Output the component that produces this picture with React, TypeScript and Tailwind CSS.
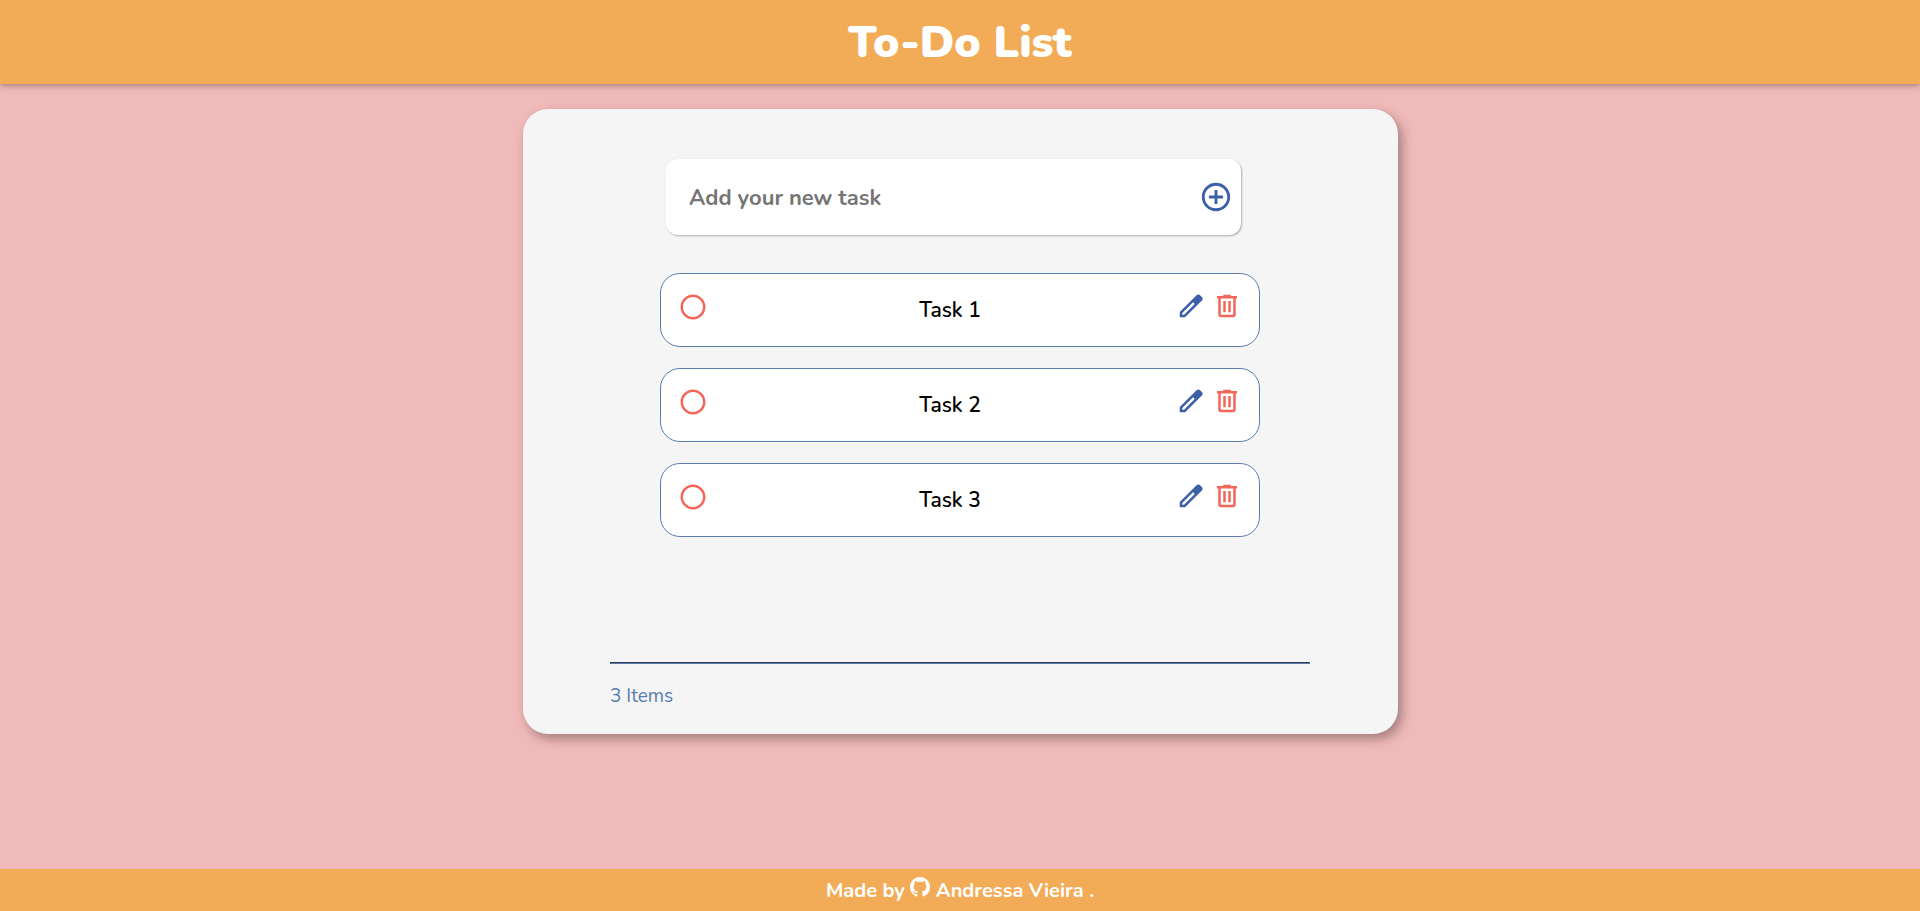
import React from "react";
import { MdAddCircleOutline, MdRadioButtonUnchecked } from "react-icons/md";
import { BsGithub } from "react-icons/bs";

const tasks = ["Task 1", "Task 2", "Task 3"];

function PencilIcon() {
  return (
    <svg viewBox="0 0 24 24" fill="currentColor" className="size-[30px]" aria-hidden="true">
      <path
        fillRule="evenodd"
        d="M3 21v-4.25L16.45 3.325q.575-.575 1.413-.575.837 0 1.412.575l1.4 1.4q.575.575.6 1.388.025.812-.55 1.387L7.25 21ZM5 19h1.4l8.625-8.625-1.4-1.4L5 17.6Z"
      />
    </svg>
  );
}

function TrashIcon() {
  return (
    <svg viewBox="0 0 24 24" fill="currentColor" className="size-[30px]" aria-hidden="true">
      <path d="M7 21q-.825 0-1.412-.587Q5 19.825 5 19V6H4V4h5V3h6v1h5v2h-1v13q0 .825-.587 1.413Q17.825 21 17 21ZM17 6H7v13h10ZM9 17h2V8H9Zm4 0h2V8h-2Z" />
    </svg>
  );
}

function TaskRow({ name }: { name: string }) {
  return (
    <li className="flex items-start rounded-[20px] border border-[#5a7dac] bg-white p-[17px]">
      <button type="button" aria-label={`Complete ${name}`} className="pt-px text-[#f3665a]">
        <MdRadioButtonUnchecked className="size-[30px]" />
      </button>
      <span className="flex-1 pl-4 text-center text-[21px] leading-[38px] font-semibold text-black">{name}</span>
      <button type="button" aria-label={`Edit ${name}`} className="mr-1.5 text-[#3c5fa8]">
        <PencilIcon />
      </button>
      <button type="button" aria-label={`Delete ${name}`} className="text-[#f3665a]">
        <TrashIcon />
      </button>
    </li>
  );
}

export default function App() {
  return (
    <div className="flex min-h-screen flex-col bg-[#f1baba] font-['Nunito','Lato',sans-serif]">
      <header className="flex h-[84px] items-center justify-center bg-[#f2ac57] pt-px shadow-[0_2px_6px_rgba(0,0,0,0.3)]">
        <h1 className="text-[44px] leading-[60px] font-black text-white">To-Do List</h1>
      </header>

      <main className="flex flex-1 flex-col items-center px-4 pt-[25px] pb-6">
        <section className="flex min-h-[625px] w-full max-w-[875px] flex-col items-center rounded-[25px] bg-[#f5f5f5] pt-[50px] pb-[22px] shadow-[4px_5px_12px_rgba(0,0,0,0.33)]">
          <div className="w-full max-w-[600px]">
            <form className="mr-[19px] ml-1.5 flex h-[76px] items-center rounded-xl bg-white pr-2 pl-[23px] shadow-[1px_1px_2px_rgba(0,0,0,0.3)]">
              <input
                type="text"
                aria-label="New task"
                placeholder="Add your new task"
                className="min-w-0 flex-1 bg-transparent pt-0.5 text-[22px] leading-8 font-bold text-black outline-none placeholder:text-[#757575]"
              />
              <button type="button" aria-label="Add task" className="text-[#3c5fa8]">
                <MdAddCircleOutline className="size-[34px]" />
              </button>
            </form>
            <ul className="mt-[38px] flex flex-col gap-[21px]">
              {tasks.map((name) => (
                <TaskRow key={name} name={name} />
              ))}
            </ul>
          </div>
          <div className="mt-auto w-4/5">
            <hr className="border border-b border-[#5a7dac] [border-style:inset]" />
            <p className="mt-4 text-[19px] leading-8 text-[#5a7dac]">3 Items</p>
          </div>
        </section>
      </main>

      <footer className="flex h-[42px] items-center justify-center bg-[#f2ac57] text-xl font-bold text-white">
        <span className="pt-0.5">Made by</span>
        <BsGithub className="mr-1.5 mb-1.5 ml-[5px] size-5" aria-hidden="true" />
        <a href="https://github.com" className="pt-0.5">
          Andressa Vieira .
        </a>
      </footer>
    </div>
  );
}
